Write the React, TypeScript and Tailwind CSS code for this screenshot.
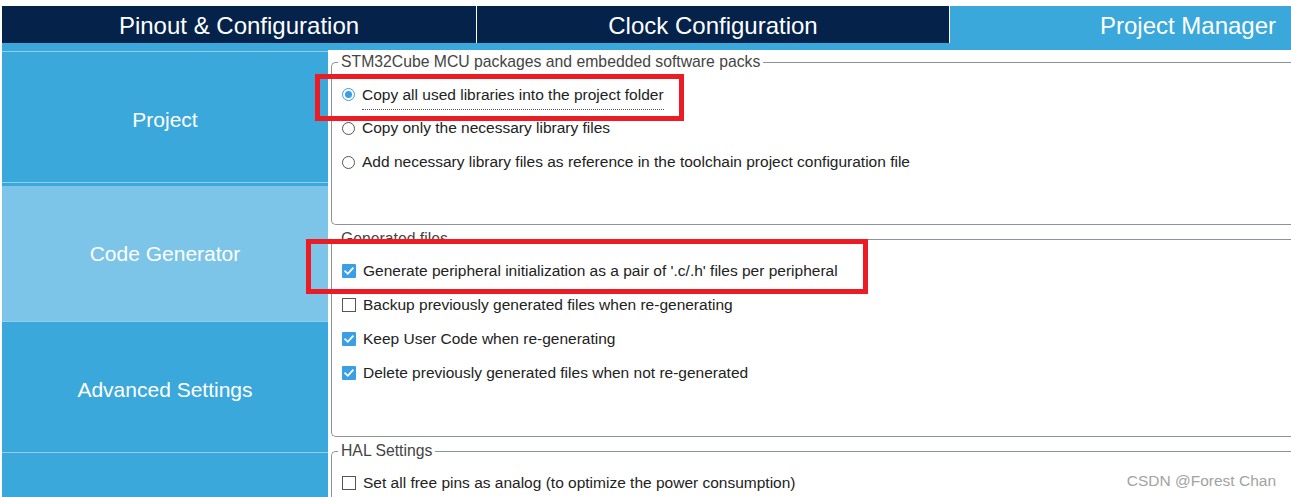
import React from 'react'

// STM32CubeMX 的 Project Manager → Code Generator 页面（带红框标注的截图）
const font = { fontFamily: '"Liberation Sans", Arial, sans-serif' }

function Radio({ checked }: { checked?: boolean }) {
  return (
    <span
      className={
        'flex h-[13px] w-[13px] shrink-0 items-center justify-center rounded-full border bg-white ' +
        (checked ? 'border-[#3a9ee4]' : 'border-[#555]')
      }
    >
      {checked && <span className="h-[7px] w-[7px] rounded-full bg-[#3a9ee4]" />}
    </span>
  )
}

function Check({ checked }: { checked?: boolean }) {
  if (!checked) return <span className="h-[14px] w-[14px] shrink-0 border border-[#555] bg-white" />
  return (
    <span className="flex h-[14px] w-[14px] shrink-0 items-center justify-center rounded-[1px] bg-[#3b9fe6]">
      <svg width="12" height="12" viewBox="0 0 12 12" fill="none">
        <path d="M2.2 6.3 L4.8 8.8 L9.8 3.2" stroke="white" strokeWidth="1.8" strokeLinecap="square" />
      </svg>
    </span>
  )
}

function Row({ children, control }: { children: React.ReactNode; control: React.ReactNode }) {
  return (
    <div className="flex h-[34px] items-center gap-[7px] pl-[10px] text-[15.5px] leading-[18px] text-[#222]">
      {control}
      {children}
    </div>
  )
}

function Group({ title, children, className }: { title: string; children: React.ReactNode; className?: string }) {
  return (
    <fieldset className={'rounded-l-[5px] border border-r-0 border-[#8d939a] pl-[6px] ' + (className ?? '')}>
      <legend className="px-[3px] text-[15.75px] leading-[18px] text-[#444]">{title}</legend>
      <div className="-ml-[6px] pt-[6px]">{children}</div>
    </fieldset>
  )
}

function SideItem({ label, active }: { label: string; active?: boolean }) {
  if (active)
    return (
      <div className="border-t border-[#8fd0ee] pt-[3px]">
        <div className="flex h-[135px] items-center justify-center bg-[#7cc5e8] text-[21px] text-white">{label}</div>
      </div>
    )
  return (
    <div className="flex h-[131px] items-center justify-center border-t border-[#8fd0ee] pt-[5px] text-[21px] text-white">
      {label}
    </div>
  )
}

export default function App() {
  return (
    <div className="relative h-[497px] w-[1291px] overflow-hidden bg-white pl-[2px] pt-[6px]" style={font}>
      {/* top tabs */}
      <div className="flex h-[37px] text-[24px] leading-none text-white">
        <div className="flex w-[474px] shrink-0 items-center justify-center bg-[#04224a] pt-[2px]">Pinout &amp; Configuration</div>
        <div className="w-px shrink-0 bg-white" />
        <div className="flex w-[472px] shrink-0 items-center justify-center bg-[#04224a] pt-[2px]">Clock Configuration</div>
        <div className="w-px shrink-0 bg-white" />
        <div className="flex w-[476px] shrink-0 items-center justify-center bg-[#3aa8db] pt-[2px]">Project Manager</div>
      </div>
      <div className="h-[7px] bg-[#3aa8db]" />

      <div className="flex">
        {/* left nav */}
        <div className="h-[460px] w-[326px] shrink-0 bg-[#3aa8db] pt-px">
          <SideItem label="Project" />
          <SideItem label="Code Generator" active />
          <SideItem label="Advanced Settings" />
          <div className="border-t border-[#8fd0ee]" />
        </div>

        {/* content */}
        <div className="flex-1 overflow-hidden pl-[3px] pt-[3px]">
          <Group title="STM32Cube MCU packages and embedded software packs" className="pb-[45px]">
            <Row control={<Radio checked />}>
              <span className="mt-[8px] border-b border-dotted border-[#555] pb-[5px]">
                Copy all used libraries into the project folder
              </span>
            </Row>
            <Row control={<Radio />}>Copy only the necessary library files</Row>
            <Row control={<Radio />}>Add necessary library files as reference in the toolchain project configuration file</Row>
          </Group>

          <Group title="Generated files" className="mt-[5px] pb-[46px]">
            <Row control={<Check checked />}>Generate peripheral initialization as a pair of '.c/.h' files per peripheral</Row>
            <Row control={<Check />}>Backup previously generated files when re-generating</Row>
            <Row control={<Check checked />}>Keep User Code when re-generating</Row>
            <Row control={<Check checked />}>Delete previously generated files when not re-generated</Row>
          </Group>

          <Group title="HAL Settings" className="mt-[5px] pb-[40px]">
            <Row control={<Check />}>Set all free pins as analog (to optimize the power consumption)</Row>
          </Group>
        </div>
      </div>

      {/* red annotation boxes */}
      <div className="pointer-events-none absolute left-[315px] top-[74px] h-[47px] w-[369px] border-[5px] border-[#ec1c24]" />
      <div className="pointer-events-none absolute left-[306px] top-[239px] h-[55px] w-[562px] border-[5px] border-[#ec1c24]" />

      <div className="absolute right-[15px] top-[471px] text-[15.5px] leading-[20px] text-[#a3a3a3]">CSDN @Forest Chan</div>
    </div>
  )
}
